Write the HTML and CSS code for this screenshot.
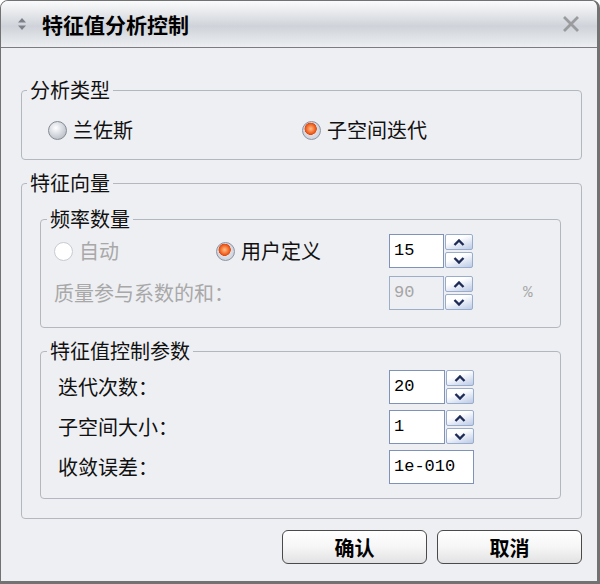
FILE: index.html
```html
<!DOCTYPE html>
<html lang="zh-CN">
<head>
    <meta charset="UTF-8">
    <title>特征值分析控制</title>
    <link rel="stylesheet" href="styles.css">
</head>
<body>

    <div class="dialog">
        <div class="titlebar">
            <svg class="title-icon" width="10" height="14" viewBox="0 0 10 14">
                <path d="M5 1 L9 5.5 H1 Z" fill="#7d8088"/>
                <path d="M5 13 L9 8.5 H1 Z" fill="#7d8088"/>
            </svg>
            <span class="title">特征值分析控制</span>
            <svg class="close" width="18" height="18" viewBox="0 0 18 18">
                <path d="M3 3 L15 15 M15 3 L3 15" stroke="#999b9f" stroke-width="2.8" stroke-linecap="square"/>
            </svg>
        </div>

        <div class="content">
            <fieldset class="group group-type">
                <legend>分析类型</legend>
                <div class="type-row">
                    <label class="radio"><span class="dot"></span>兰佐斯</label>
                    <label class="radio checked"><span class="dot"></span>子空间迭代</label>
                </div>
            </fieldset>

            <fieldset class="group group-vector">
                <legend>特征向量</legend>
                <div class="vector-body">

                    <fieldset class="group inner group-freq">
                        <legend>频率数量</legend>
                        <div class="freq-grid">
                            <label class="radio disabled"><span class="dot"></span>自动</label>
                            <label class="radio checked"><span class="dot"></span>用户定义</label>
                            <div class="spin">
                                <span class="spin-box">15</span>
                                <span class="spin-btns">
                                    <span class="spin-btn"><svg width="12" height="7" viewBox="0 0 12 7"><path d="M1.5 6 L6 1.5 L10.5 6" fill="none" stroke="#1e2b57" stroke-width="2.4"/></svg></span>
                                    <span class="spin-btn"><svg width="12" height="7" viewBox="0 0 12 7"><path d="M1.5 1 L6 5.5 L10.5 1" fill="none" stroke="#1e2b57" stroke-width="2.4"/></svg></span>
                                </span>
                            </div>
                            <span></span>

                            <span class="field-label disabled span2">质量参与系数的和：</span>
                            <div class="spin disabled">
                                <span class="spin-box">90</span>
                                <span class="spin-btns">
                                    <span class="spin-btn"><svg width="12" height="7" viewBox="0 0 12 7"><path d="M1.5 6 L6 1.5 L10.5 6" fill="none" stroke="#1e2b57" stroke-width="2.4"/></svg></span>
                                    <span class="spin-btn"><svg width="12" height="7" viewBox="0 0 12 7"><path d="M1.5 1 L6 5.5 L10.5 1" fill="none" stroke="#1e2b57" stroke-width="2.4"/></svg></span>
                                </span>
                            </div>
                            <span class="unit">%</span>
                        </div>
                    </fieldset>

                    <fieldset class="group inner group-params">
                        <legend>特征值控制参数</legend>
                        <div class="params-grid">
                            <span class="field-label">迭代次数：</span>
                            <div class="spin">
                                <span class="spin-box">20</span>
                                <span class="spin-btns">
                                    <span class="spin-btn"><svg width="12" height="7" viewBox="0 0 12 7"><path d="M1.5 6 L6 1.5 L10.5 6" fill="none" stroke="#1e2b57" stroke-width="2.4"/></svg></span>
                                    <span class="spin-btn"><svg width="12" height="7" viewBox="0 0 12 7"><path d="M1.5 1 L6 5.5 L10.5 1" fill="none" stroke="#1e2b57" stroke-width="2.4"/></svg></span>
                                </span>
                            </div>

                            <span class="field-label">子空间大小：</span>
                            <div class="spin">
                                <span class="spin-box">1</span>
                                <span class="spin-btns">
                                    <span class="spin-btn"><svg width="12" height="7" viewBox="0 0 12 7"><path d="M1.5 6 L6 1.5 L10.5 6" fill="none" stroke="#1e2b57" stroke-width="2.4"/></svg></span>
                                    <span class="spin-btn"><svg width="12" height="7" viewBox="0 0 12 7"><path d="M1.5 1 L6 5.5 L10.5 1" fill="none" stroke="#1e2b57" stroke-width="2.4"/></svg></span>
                                </span>
                            </div>

                            <span class="field-label">收敛误差：</span>
                            <span class="text-box">1e-010</span>
                        </div>
                    </fieldset>

                </div>
            </fieldset>

            <div class="buttons">
                <button class="btn">确认</button>
                <button class="btn">取消</button>
            </div>
        </div>
    </div>

</body>
</html>
```

FILE: styles.css
```css
body {
    margin: 0;
    padding: 0;
    background: #ffffff;
    font-family: 'Noto Sans CJK SC', 'Noto Sans', sans-serif;
    color: #111;
}

.dialog {
    width: 600px;
    height: 584px;
    box-sizing: border-box;
    border: 1px solid #727272;
    border-right-width: 3px;
    border-bottom-width: 3px;
    border-radius: 8px 8px 0 0;
    background: #eeeff3;
    overflow: hidden;
}

/* Title bar */
.titlebar {
    height: 46px;
    border-bottom: 1px solid #7a7c80;
    display: flex;
    align-items: center;
    padding: 0 0 0 16px;
    background: linear-gradient(#fafbfc 0%, #e7e9ec 25%, #cfd3d9 55%, #dfe2e6 80%, #eceef1 100%);
}

.title-icon {
    margin-right: 15px;
}

.title {
    font-size: 21px;
    font-weight: 700;
    color: #000;
    flex: 1;
}

.close {
    margin-right: 17px;
}

/* Content */
.content {
    padding: 31px 15px 0 20px;
}

.group {
    margin: 0;
    padding: 0;
    min-width: 0;
    border: 1px solid #b3b7bf;
    border-radius: 4px;
}

.group legend {
    font-size: 20px;
    line-height: 22px;
    padding: 0 3px;
    margin-left: 5px;
}

.group.inner legend {
    margin-left: 6px;
}

.type-row {
    display: grid;
    grid-template-columns: 254px auto;
    padding: 18px 0 18px 26px;
}

.radio {
    display: flex;
    align-items: center;
    gap: 6px;
    font-size: 20px;
    line-height: 22px;
}

.radio .dot {
    width: 17px;
    height: 17px;
    border-radius: 50%;
    border: 1px solid #858a94;
    background: radial-gradient(circle at 40% 35%, #ffffff 0%, #dcdfe4 40%, #a9aeb7 100%);
    flex: none;
}

.radio.checked .dot {
    border-color: #8c93a3;
    background:
        radial-gradient(circle at 45% 40%, #ffc08a 0%, #f0601e 34%, #e04a10 42%, transparent 46%),
        radial-gradient(circle, #eceef3 0%, #c4c9d4 100%);
}

.radio.disabled .dot {
    border-color: #c6cad2;
    background: #ffffff;
}

.radio.disabled,
.field-label.disabled,
.unit {
    color: #a8a8a8;
}

.group-vector {
    margin-top: 12px;
}

.vector-body {
    padding: 14px 20px 19px 18px;
}

.freq-grid {
    display: grid;
    grid-template-columns: 162px 173px 84px auto;
    grid-auto-rows: 34px;
    row-gap: 8px;
    align-items: center;
    padding: 4px 0 17px 13px;
}

.span2 {
    grid-column: span 2;
}

.field-label {
    font-size: 20px;
    line-height: 22px;
}

.unit {
    font-family: 'Liberation Mono', monospace;
    font-size: 16px;
    margin-left: 50px;
}

.group-params {
    margin-top: 12px;
}

.params-grid {
    display: grid;
    grid-template-columns: 331px auto;
    grid-auto-rows: 34px;
    row-gap: 6px;
    align-items: center;
    padding: 8px 0 14px 17px;
}

/* Spin boxes */
.spin {
    display: flex;
    gap: 1px;
    height: 34px;
}

.spin-box,
.text-box {
    width: 56px;
    box-sizing: border-box;
    border: 1px solid #7f92b8;
    background: #fff;
    font-family: 'Liberation Mono', monospace;
    font-size: 17px;
    color: #000;
    padding: 6px 0 0 4px;
}

.text-box {
    width: 85px;
    height: 34px;
}

.spin.disabled .spin-box {
    background: #eeeff3;
    border-color: #9eadc8;
    color: #a5a5a5;
}

.spin-btns {
    display: flex;
    flex-direction: column;
    justify-content: space-between;
}

.spin-btn {
    width: 28px;
    height: 16px;
    box-sizing: border-box;
    border: 1px solid #9aaccc;
    border-radius: 2px;
    background: linear-gradient(160deg, #ffffff 35%, #dbe3f2 70%, #bccae6 100%);
    display: flex;
    align-items: center;
    justify-content: center;
}

/* Buttons */
.buttons {
    display: flex;
    justify-content: flex-end;
    gap: 10px;
    margin-top: 11px;
}

.btn {
    width: 145px;
    height: 34px;
    border: 1px solid #4a4a4a;
    border-radius: 6px;
    background: linear-gradient(#ffffff 0%, #f6f6f6 50%, #e2e2e4 100%);
    font-family: 'Noto Sans CJK SC', sans-serif;
    font-size: 20px;
    font-weight: 700;
    color: #000;
    padding: 0;
}
```
